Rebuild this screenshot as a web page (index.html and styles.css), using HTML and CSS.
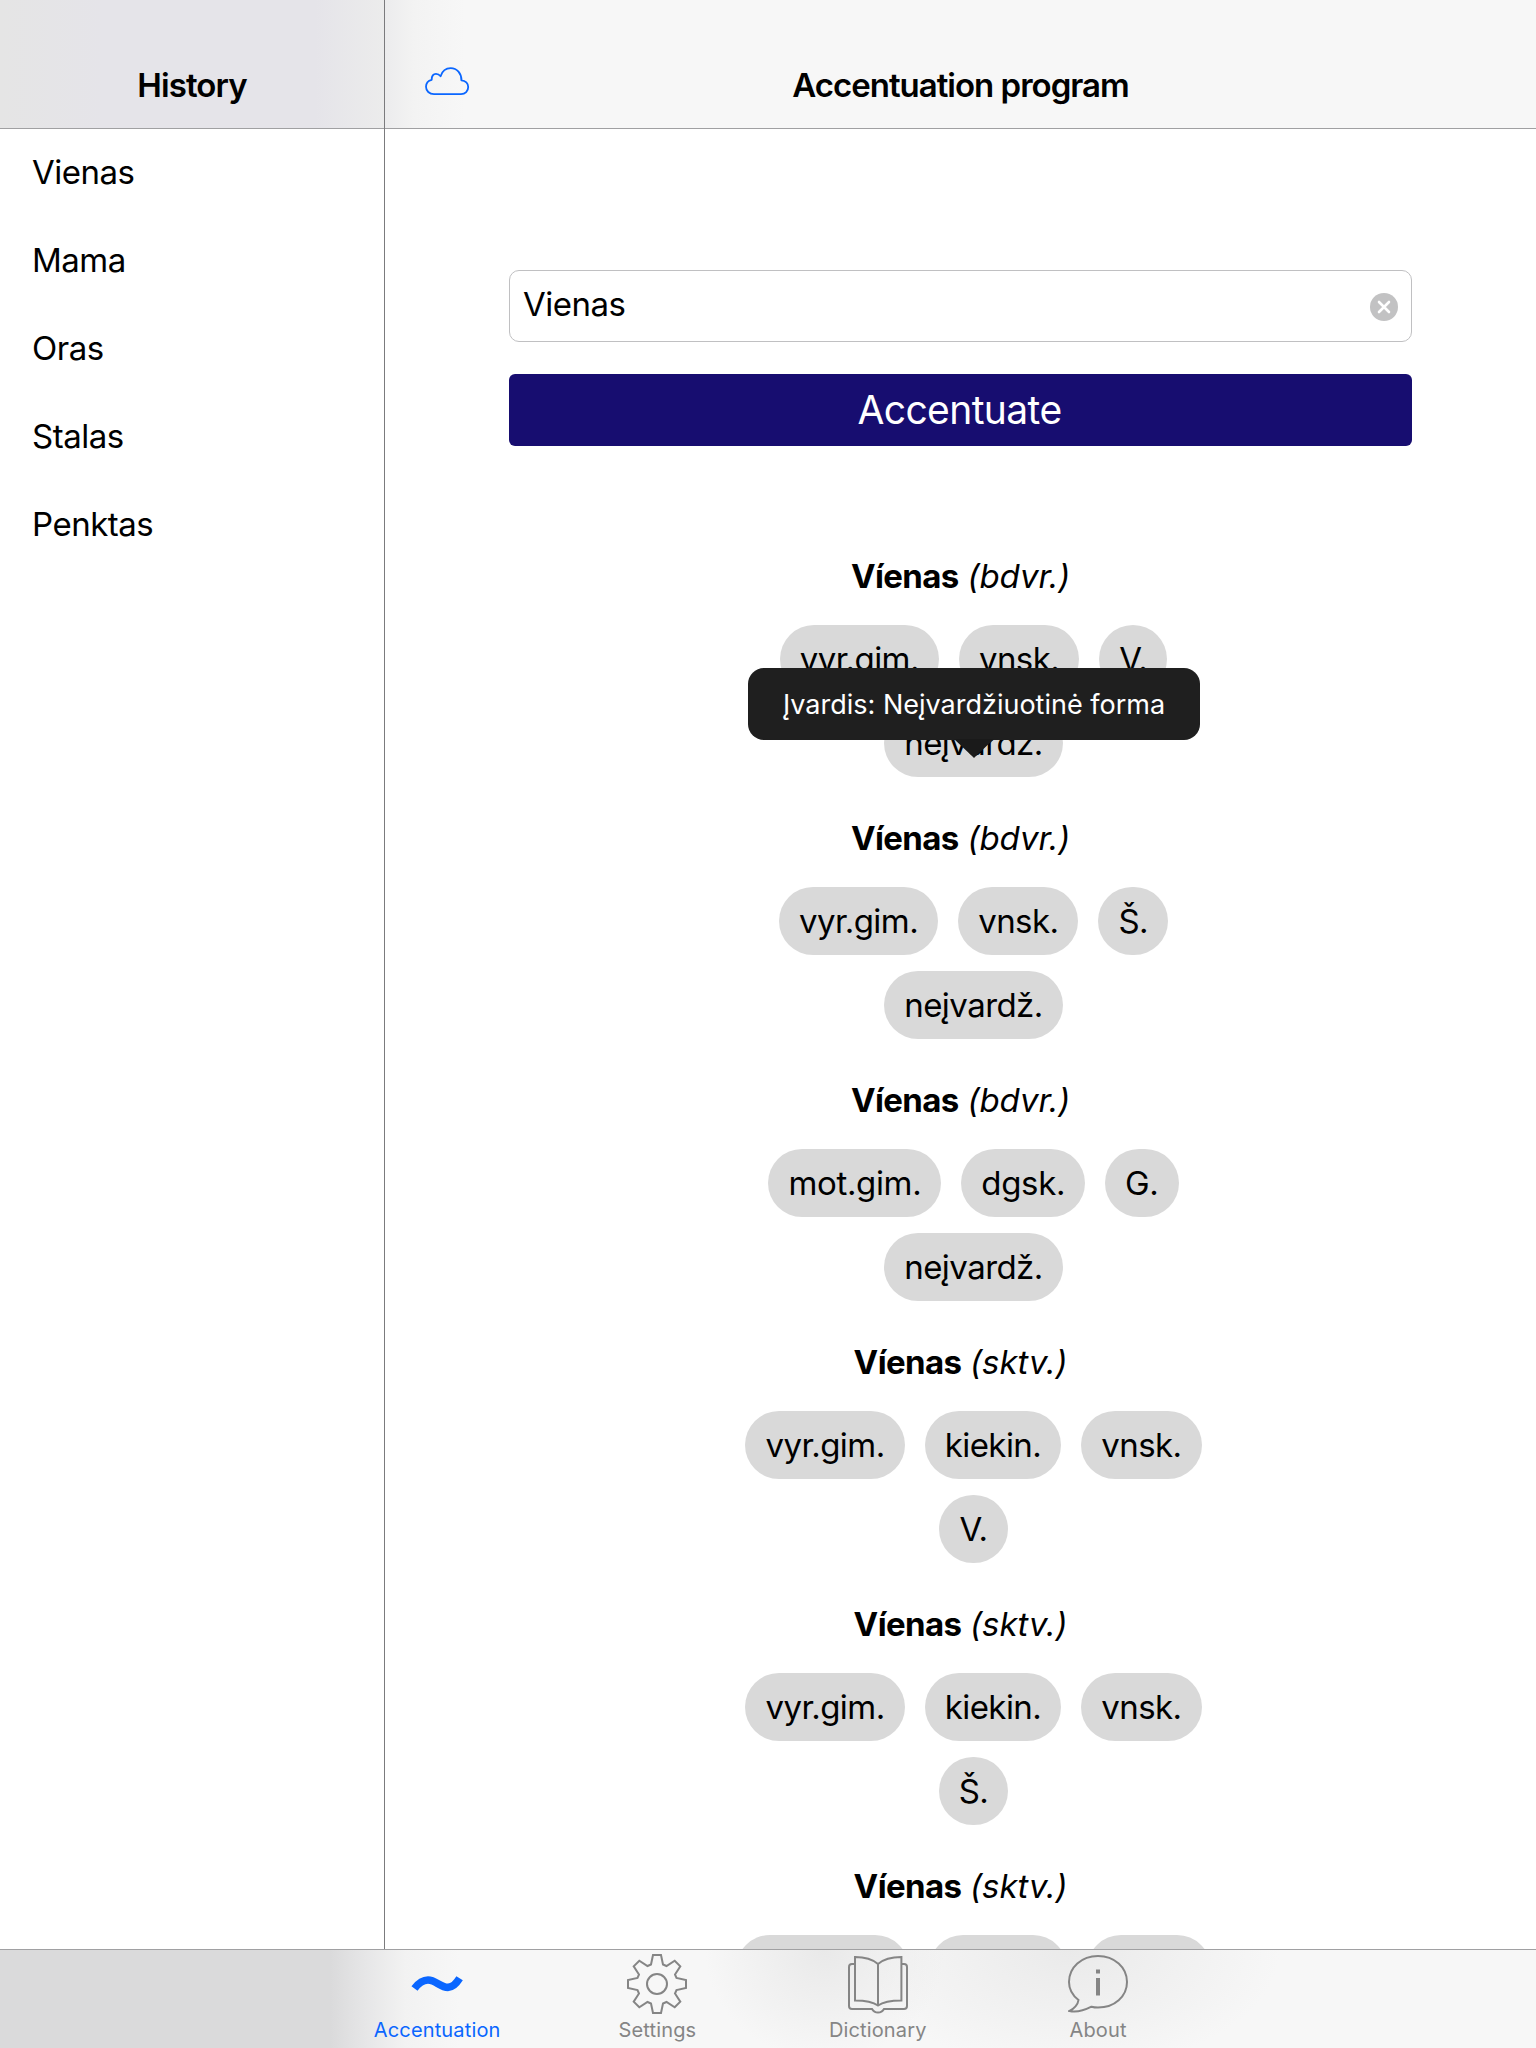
FILE: index.html
```html
<!DOCTYPE html>
<html lang="en">
<head>
<meta charset="utf-8">
<title>Accentuation program</title>
<link rel="stylesheet" href="styles.css">
</head>
<body>
<div class="app">
  <div class="split">
    <aside class="sidebar">
      <header class="bar bar-side"><h1 class="title title-side">History</h1></header>
      <ul class="history">
        <li>Vienas</li><li>Mama</li><li>Oras</li><li>Stalas</li><li>Penktas</li>
      </ul>
    </aside>
    <main class="detail">
      <header class="bar bar-main">
        <svg class="cloud" width="46" height="30" viewBox="0 0 46 30"><path d="M9 27.200C4.300 27.200 1 23.800 1 19.800C1 16.300 3.300 13.600 6.700 12.800C6.500 9 8.300 6.800 11 6.800C13 6.800 14.500 7.800 15.600 9.200C17.300 4 21.300 1.200 25.700 1.200C32 1.200 36.600 6.500 36.400 13.300C40.500 13.500 43.200 16.500 43.200 20C43.200 24 40.300 27.200 36 27.200Z"/></svg>
        <h1 class="title">Accentuation program</h1>
      </header>
      <section class="content">
        <div class="field"><span class="value">Vienas</span>
          <svg class="clear" width="28" height="28" viewBox="0 0 28 28"><circle cx="14" cy="14" r="14" fill="#c2c2c3"/><path d="M9 9L19 19M19 9L9 19" stroke="#fff" stroke-width="2.6" stroke-linecap="round"/></svg>
        </div>
        <button class="submit">Accentuate</button>
        <div class="results">
          <article class="entry"><h2><b>Víenas</b> <i>(bdvr.)</i></h2>
            <div class="pills"><span>vyr.gim.</span><span>vnsk.</span><span>V.</span><span>neįvardž.</span>
              <div class="tooltip">Įvardis: Neįvardžiuotinė forma</div></div></article>
          <article class="entry"><h2><b>Víenas</b> <i>(bdvr.)</i></h2>
            <div class="pills"><span>vyr.gim.</span><span>vnsk.</span><span>Š.</span><span>neįvardž.</span></div></article>
          <article class="entry"><h2><b>Víenas</b> <i>(bdvr.)</i></h2>
            <div class="pills pills-wide"><span>mot.gim.</span><span>dgsk.</span><span>G.</span><span>neįvardž.</span></div></article>
          <article class="entry"><h2><b>Víenas</b> <i>(sktv.)</i></h2>
            <div class="pills"><span>vyr.gim.</span><span>kiekin.</span><span>vnsk.</span><span>V.</span></div></article>
          <article class="entry"><h2><b>Víenas</b> <i>(sktv.)</i></h2>
            <div class="pills"><span>vyr.gim.</span><span>kiekin.</span><span>vnsk.</span><span>Š.</span></div></article>
          <article class="entry"><h2><b>Víenas</b> <i>(sktv.)</i></h2>
            <div class="pills pills-cut"><span></span><span></span><span></span></div></article>
        </div>
      </section>
    </main>
  </div>
  <nav class="tabs">
    <a class="tab active"><svg width="60" height="60" viewBox="0 0 60 60"><path d="M7.5 34.5C12 28.5 16 26 21 26C29 26 33 33.4 41 33.4C46 33.4 50 28.5 52.6 24.3" stroke-width="7.6"/></svg>Accentuation</a>
    <a class="tab"><svg width="60" height="60" viewBox="-30 -30 60 60"><path d="M-6-19.5L-4-29H4L6-19.5L9.5-18L17.7-23.3L23.3-17.7L18-9.5L19.5-6L29-4V4L19.5 6L18 9.5L23.3 17.7L17.7 23.3L9.5 18L6 19.5L4 29H-4L-6 19.5L-9.5 18L-17.7 23.3L-23.3 17.7L-18 9.5L-19.5 6L-29 4V-4L-19.5-6L-18-9.5L-23.3-17.7L-17.7-23.3L-9.5-18Z"/><circle r="10"/></svg>Settings</a>
    <a class="tab"><svg width="60" height="60" viewBox="0 -2 60 60"><path d="M7 1Q22 1 30 8Q38 1 53.4 1V44.5Q37 44.5 30 49.5Q23 44.5 7 44.5ZM30 8V49.5M6.5 8H4Q1 8 1 11V50Q1 53 4 53H24Q26 56.6 30 56.6Q34 56.6 36 53H56Q59 53 59 50V11Q59 8 56 8H54"/></svg>Dictionary</a>
    <a class="tab"><svg width="60" height="60" viewBox="0 -1 60 60"><path d="M10.5 45C4 40 1 33.5 1 27C1 12.500 13.500 1 30 1S59 12.500 59 27S46.500 52.500 30 52.500Q26.500 52.500 23.500 51.700C16 55.500 8 57.500 1.500 56C6 54 10 49.500 10.500 45Z"/><path d="M28 14.500H32V18.500H28ZM28 23H32V40.500H28Z" fill="currentColor" stroke="none"/></svg>About</a>
  </nav>
</div>
</body>
</html>
```
FILE: styles.css
```css
* { box-sizing: border-box; }
body { margin: 0; background: #fff; color: #000; font-family: Inter, "Liberation Sans", sans-serif; font-size: 34px; }
.app { width: 1536px; height: 2048px; display: flex; flex-direction: column; overflow: hidden; }
.split { height: 1949px; display: flex; overflow: hidden; }
.sidebar { width: 385px; border-right: 1px solid #7b7b7d; }
.detail { flex: 1; }
.bar { height: 129px; border-bottom: 1px solid #a0a0a2; display: flex; justify-content: center; align-items: flex-end; position: relative; }
.bar-side { background: linear-gradient(90deg, #e5e5e5, #e5e4e9 27%, #e5e4e9 82%, #ececec); }
.bar-main { background: linear-gradient(90deg, #ececed, #f3f3f3 30px, #f7f7f7 80px); }
.title { margin: 0 0 22px; font-size: 33px; line-height: 42px; font-weight: 600; letter-spacing: -1px; }
.title-side { letter-spacing: -0.9px; }
.cloud { position: absolute; left: 40px; top: 67px; fill: none; stroke: #0a66ff; stroke-width: 1.8; stroke-linejoin: round; }
.history { list-style: none; margin: 0; padding: 0 0 0 32px; font-size: 33px; letter-spacing: -0.5px; }
.history li { height: 88px; line-height: 86px; }
.content { padding: 141px 124px 0; }
.field { height: 72px; border: 1px solid #c0c0c2; border-radius: 10px; display: flex; align-items: center; justify-content: space-between; padding: 0 13px; }
.value { font-size: 33px; letter-spacing: -0.5px; padding-bottom: 4px; }
.clear { margin-top: 2px; }
.submit { display: block; width: 100%; height: 72px; margin-top: 32px; border: 0; border-radius: 6px; background: #170d70; color: #fff; font: 400 39px/72px Inter, sans-serif; letter-spacing: -0.6px; padding: 0 2px 0 0; }
.results { padding-top: 104px; }
.entry { height: 262px; }
.entry h2 { margin: 0; height: 75px; font-size: 33px; line-height: 52px; font-weight: 400; text-align: center; letter-spacing: -0.6px; }
.entry i { letter-spacing: -0.05px; }
.pills { position: relative; width: 500px; margin-left: 214.5px; display: flex; flex-wrap: wrap; justify-content: center; gap: 16px 20px; }
.pills > span { height: 68px; line-height: 68px; padding: 0 20px; border-radius: 34px; background: #d9d9d9; font-size: 33px; letter-spacing: -0.55px; }
.pills-wide > span:nth-child(-n+3) { letter-spacing: -0.35px; }
.pills-cut > span:nth-child(1) { width: 173px; }
.pills-cut > span:nth-child(2) { width: 138px; }
.pills-cut > span:nth-child(3) { width: 124px; }
.tooltip { position: absolute; left: 24.5px; top: 43px; width: 452px; height: 72px; border-radius: 16px; background: #1f1f1f; color: #fff; font-size: 27px; line-height: 73px; text-align: center; white-space: nowrap; }
.tooltip::after { content: ""; position: absolute; left: 206px; top: 71px; width: 40px; height: 19px; background: #1a1a1a; clip-path: polygon(0 0, 100% 0, 55% 90%, 50% 100%, 45% 90%); }
.tabs { height: 99px; border-top: 1px solid #a0a0a2; padding-left: 327px; display: flex; background: radial-gradient(ellipse 120px 110px at 825px 0, #e9e9e9, #e9e9e900), radial-gradient(ellipse 210px 120px at 1070px 0, #eaeaea, #eaeaea00), linear-gradient(90deg, #dadadb 330px, #e6e6e7 365px, #f2f2f2 405px, #f7f7f7 460px); }
.tab { width: 220.3px; padding-top: 4px; display: flex; flex-direction: column; align-items: center; color: #858585; font-size: 20px; line-height: 24px; gap: 4px; letter-spacing: 0.15px; }
.tab svg { fill: none; stroke: currentColor; stroke-width: 2; }
.tab.active { color: #0a66ff; }
```
